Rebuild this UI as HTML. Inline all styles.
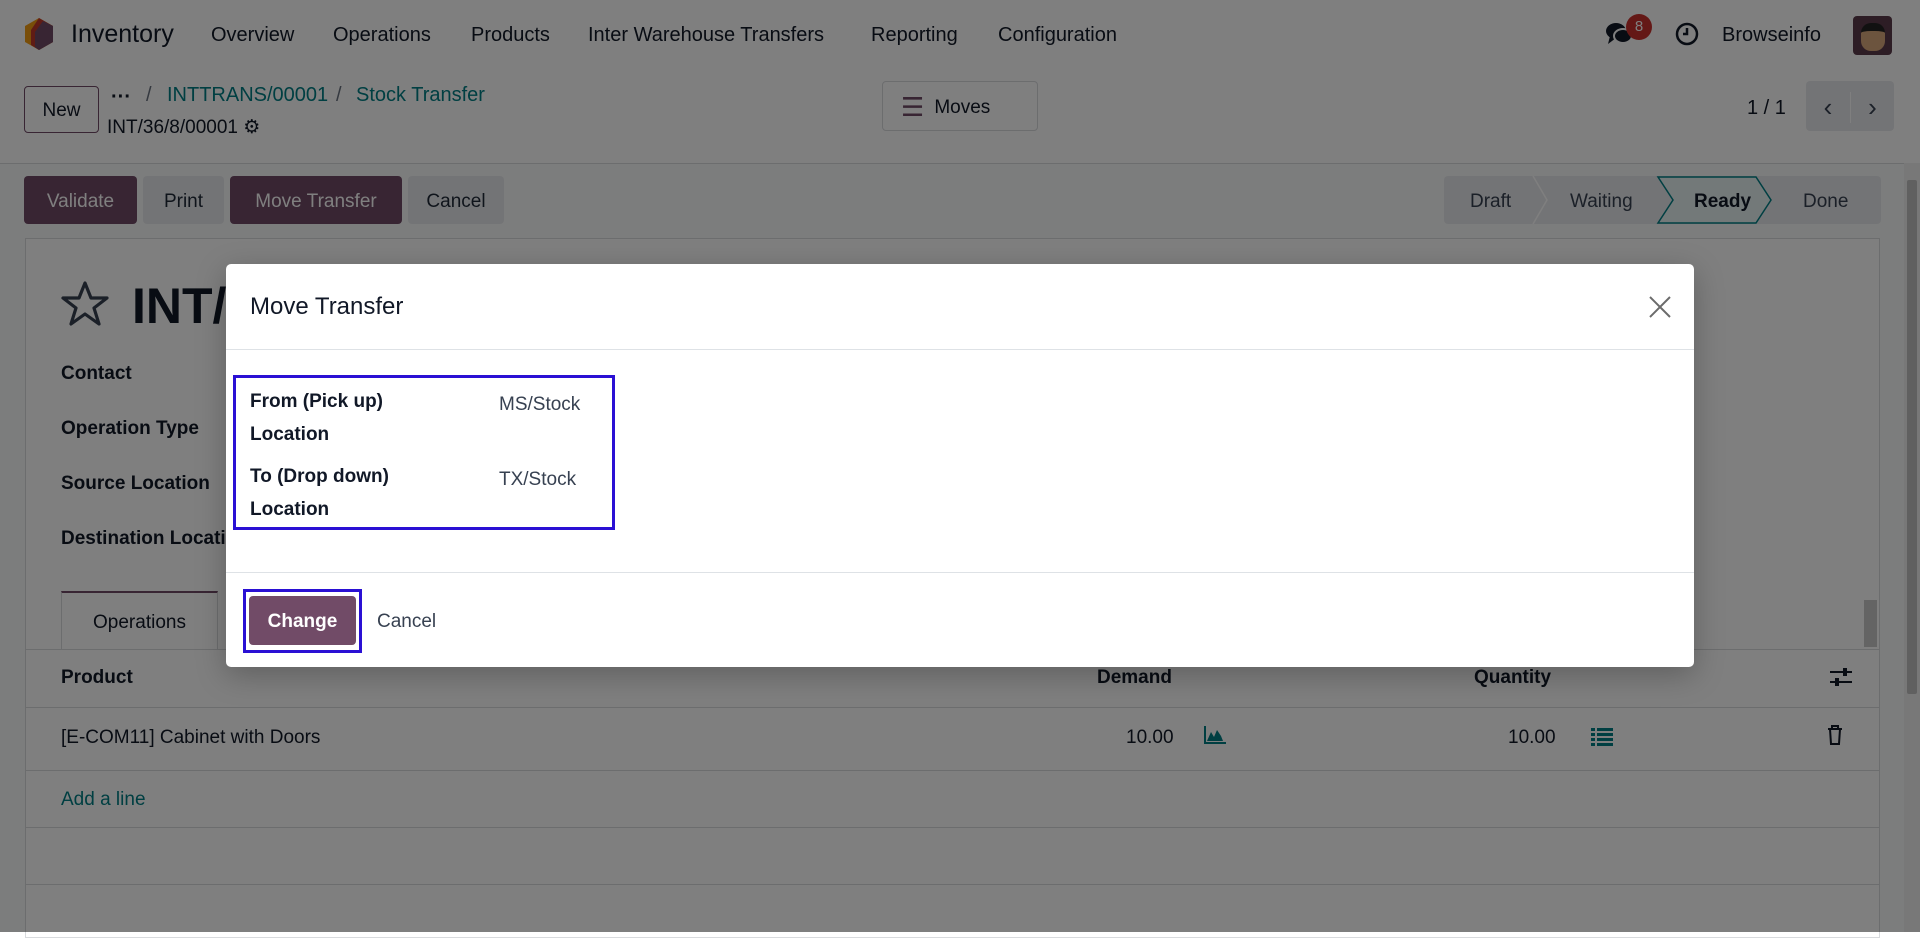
<!DOCTYPE html>
<html><head><meta charset="utf-8"><style>
*{box-sizing:border-box;margin:0;padding:0}
body{width:1920px;height:932px;overflow:hidden;position:relative;background:#fff;font-family:"Liberation Sans","DejaVu Sans",sans-serif;color:#374151;font-size:17.5px}
.a{position:absolute;white-space:nowrap}
.t{margin-top:2px}
.nav{left:0;top:0;width:1920px;height:68px;background:#fff}
.menu{top:24px;font-size:20px;color:#111827}
.btn{position:absolute;border-radius:4px;display:flex;align-items:center;justify-content:center;font-size:19px;padding-top:3px}
.p{background:#714b67;color:#fff}
.s{background:#e7e9ed;color:#1f2937}
.lbl{font-weight:bold;color:#111827;font-size:19px}
.line{position:absolute;left:25px;width:1855px;height:1px;background:#d8dadd}
.teal{color:#017e84}
#ov{position:absolute;left:0;top:0;width:1920px;height:932px;background:rgba(0,0,0,.5)}
</style></head><body>
<div class="a nav"></div>
<svg class="a" style="left:24px;top:17px" width="30" height="34" viewBox="0 0 30 34"><polygon points="15,1 29,9 29,25 15,33 1,25 1,9" fill="#f39c12"/><polygon points="15,1 29,9 29,25 15,33 7,28 7,13" fill="#c0392b"/><polygon points="19,4 29,9 29,25 15,33 11,30 11,15" fill="#714b67"/></svg>
<div class="a" style="left:71px;top:20px;font-size:25px;color:#111827">Inventory</div>
<div class="a menu" style="left:211px">Overview</div>
<div class="a menu" style="left:333px">Operations</div>
<div class="a menu" style="left:471px">Products</div>
<div class="a menu" style="left:588px">Inter Warehouse Transfers</div>
<div class="a menu" style="left:871px">Reporting</div>
<div class="a menu" style="left:998px">Configuration</div>
<svg class="a" style="left:1605px;top:20px" width="30" height="28" viewBox="0 0 30 28"><ellipse cx="11" cy="11" rx="10" ry="8" fill="#111827"/><polygon points="5,16 3,24 11,18" fill="#111827"/><ellipse cx="18" cy="16" rx="9" ry="7" fill="#111827" stroke="#fff" stroke-width="2"/></svg>
<div class="a" style="left:1626px;top:14px;width:26px;height:26px;border-radius:13px;background:#c9302c;color:#fff;font-size:15px;text-align:center;line-height:26px">8</div>
<svg class="a" style="left:1675px;top:22px" width="24" height="24" viewBox="0 0 24 24"><circle cx="12" cy="12" r="10" fill="none" stroke="#111827" stroke-width="2.5"/><path d="M12 6v6h-4" stroke="#111827" stroke-width="2.5" fill="none"/></svg>
<div class="a" style="left:1722px;top:24px;font-size:20px;color:#111827">Browseinfo</div>
<div class="a" style="left:1853px;top:16px;width:39px;height:39px;border-radius:4px;background:#5b3a4b"><div style="margin:7px auto 0;width:24px;height:28px;border-radius:10px;background:#d9a87c;border-top:8px solid #222"></div></div>

<div class="btn" style="left:24px;top:86px;width:75px;height:47px;border:1px solid #714b67;color:#111827;background:#fff">New</div>
<div class="a" style="left:111px;top:86px;font-size:20px;color:#111827;font-weight:bold">···</div>
<div class="a" style="left:146px;top:84px;font-size:20px;color:#6b7280">/</div>
<div class="a teal" style="left:167px;top:84px;font-size:20px">INTTRANS/00001</div>
<div class="a" style="left:336px;top:84px;font-size:20px;color:#6b7280">/</div>
<div class="a teal" style="left:356px;top:84px;font-size:20px">Stock Transfer</div>
<div class="a" style="left:107px;top:116px;font-size:19px;color:#111827">INT/36/8/00001 ⚙</div>
<div class="btn" style="left:882px;top:81px;width:156px;height:50px;border:1px solid #d8dadd;background:#fff;color:#111827;justify-content:flex-start;padding-left:18px"><span style="font-size:26px;margin-right:10px;color:#714b67">☰</span>Moves</div>
<div class="a" style="left:1747px;top:97px;font-size:20px;color:#111827">1 / 1</div>
<div class="btn s" style="left:1806px;top:81px;width:88px;height:50px"><span style="width:44px;text-align:center;font-size:26px;color:#374151">‹</span><span style="width:44px;text-align:center;font-size:26px;color:#374151;border-left:1px solid #fff">›</span></div>
<div class="a" style="left:0;top:163px;width:1920px;height:1px;background:#d8dadd"></div>
<div class="a" style="left:0;top:164px;width:1904px;height:768px;background:#f9fafb"></div>

<div class="btn p" style="left:24px;top:176px;width:113px;height:48px">Validate</div>
<div class="btn s" style="left:143px;top:176px;width:81px;height:48px">Print</div>
<div class="btn p" style="left:230px;top:176px;width:172px;height:48px">Move Transfer</div>
<div class="btn s" style="left:408px;top:176px;width:96px;height:48px">Cancel</div>
<div class="a" style="left:1444px;top:176px;width:437px;height:48px;background:#e7e9ed;border-radius:4px"></div>
<svg class="a" style="left:1530px;top:176px" width="20" height="48"><path d="M3 0L17 24L3 48" fill="none" stroke="#fff" stroke-width="1.5"/></svg>
<div class="a" style="left:1470px;top:191px;font-size:19px;color:#374151">Draft</div>
<div class="a" style="left:1570px;top:191px;font-size:19px;color:#374151">Waiting</div>
<svg class="a" style="left:1655px;top:176px" width="120" height="48"><polygon points="3,1 101,1 116,24 101,47 3,47 18,24" fill="#e6f2f3" stroke="#017e84" stroke-width="1.5"/></svg>
<div class="a" style="left:1694px;top:191px;font-size:19px;color:#111827;font-weight:bold">Ready</div>
<div class="a" style="left:1803px;top:191px;font-size:19px;color:#374151">Done</div>

<div class="a" style="left:25px;top:238px;width:1855px;height:700px;background:#fff;border:1px solid #d8dadd"></div>
<svg class="a" style="left:61px;top:280px" width="48" height="46" viewBox="0 0 24 23"><polygon points="12,1.5 15,9 23,9 16.5,14 19,22 12,17 5,22 7.5,14 1,9 9,9" fill="none" stroke="#374151" stroke-width="1.6" stroke-linejoin="round"/></svg>
<div class="a" style="left:132px;top:277px;font-size:50px;font-weight:bold;color:#111827">INT/</div>
<div class="a lbl" style="left:61px;top:363px">Contact</div>
<div class="a lbl" style="left:61px;top:418px">Operation Type</div>
<div class="a lbl" style="left:61px;top:473px">Source Location</div>
<div class="a lbl" style="left:61px;top:528px">Destination Location</div>
<div class="a" style="left:61px;top:591px;width:157px;height:59px;border:1px solid #d8dadd;border-top:2px solid #714b67;border-bottom:none;background:#fff;text-align:center;line-height:60px;font-size:19px;color:#111827">Operations</div>
<div class="line" style="top:649px"></div>
<div class="a" style="left:1864px;top:600px;width:13px;height:47px;background:#c8c8c8"></div>
<div class="a lbl" style="left:61px;top:667px">Product</div>
<div class="a lbl" style="left:1097px;top:667px">Demand</div>
<div class="a lbl" style="left:1474px;top:667px">Quantity</div>
<svg class="a" style="left:1830px;top:667px" width="22" height="20"><path d="M0 5h22M0 15h22" stroke="#111827" stroke-width="2"/><rect x="13" y="1" width="4" height="8" fill="#111827"/><rect x="5" y="11" width="4" height="8" fill="#111827"/></svg>
<div class="line" style="top:707px"></div>
<div class="a" style="left:61px;top:727px;font-size:19px;color:#111827">[E-COM11] Cabinet with Doors</div>
<div class="a" style="left:1126px;top:727px;font-size:19px;color:#111827">10.00</div>
<svg class="a" style="left:1202px;top:726px" width="24" height="20"><path d="M2 0v18h22v-2H4V0z M5 15l4-9 3 5 3-7 4 6 2 5z" fill="#017e84"/></svg>
<div class="a" style="left:1508px;top:727px;font-size:19px;color:#111827">10.00</div>
<svg class="a" style="left:1591px;top:727px" width="22" height="20"><g fill="#017e84"><rect x="0" y="1" width="4" height="3"/><rect x="6" y="1" width="16" height="3"/><rect x="0" y="6" width="4" height="3"/><rect x="6" y="6" width="16" height="3"/><rect x="0" y="11" width="4" height="3"/><rect x="6" y="11" width="16" height="3"/><rect x="0" y="16" width="4" height="3"/><rect x="6" y="16" width="16" height="3"/></g></svg>
<svg class="a" style="left:1827px;top:725px" width="16" height="20"><path d="M1 4h14M5 4V1h6v3M3 4l1 15h8l1-15" fill="none" stroke="#111827" stroke-width="2"/></svg>
<div class="line" style="top:770px"></div>
<div class="a teal" style="left:61px;top:789px;font-size:19px">Add a line</div>
<div class="line" style="top:827px"></div>
<div class="line" style="top:884px"></div>
<div class="a" style="left:1904px;top:163px;width:16px;height:769px;background:#f1f1f1"></div>
<div class="a" style="left:1907px;top:180px;width:10px;height:514px;background:#c1c1c1;border-radius:2px"></div>

<div id="ov"></div>

<div class="a" style="left:226px;top:264px;width:1468px;height:403px;background:#fff;border-radius:5px;box-shadow:0 8px 30px rgba(0,0,0,.25)"></div>
<div class="a" style="left:250px;top:293px;font-size:24px;color:#111827">Move Transfer</div>
<svg class="a" style="left:1649px;top:296px" width="22" height="22"><path d="M1 1L21 21M21 1L1 21" stroke="#6b6b6b" stroke-width="2"/></svg>
<div class="a" style="left:226px;top:349px;width:1468px;height:1px;background:#dee2e6"></div>
<div class="a" style="left:233px;top:375px;width:382px;height:155px;border:3px solid #2a10d4"></div>
<div class="a lbl" style="left:250px;top:391px">From (Pick up)</div>
<div class="a lbl" style="left:250px;top:424px">Location</div>
<div class="a lbl" style="left:250px;top:466px">To (Drop down)</div>
<div class="a lbl" style="left:250px;top:499px">Location</div>
<div class="a" style="left:499px;top:394px;font-size:19px;color:#374151">MS/Stock</div>
<div class="a" style="left:499px;top:469px;font-size:19px;color:#374151">TX/Stock</div>
<div class="a" style="left:226px;top:572px;width:1468px;height:1px;background:#dee2e6"></div>
<div class="a" style="left:243px;top:589px;width:119px;height:64px;border:3px solid #2a10d4"></div>
<div class="btn p" style="left:249px;top:596px;width:107px;height:49px;font-weight:bold">Change</div>
<div class="a" style="left:377px;top:611px;font-size:19px;color:#374151">Cancel</div>
</body></html>
